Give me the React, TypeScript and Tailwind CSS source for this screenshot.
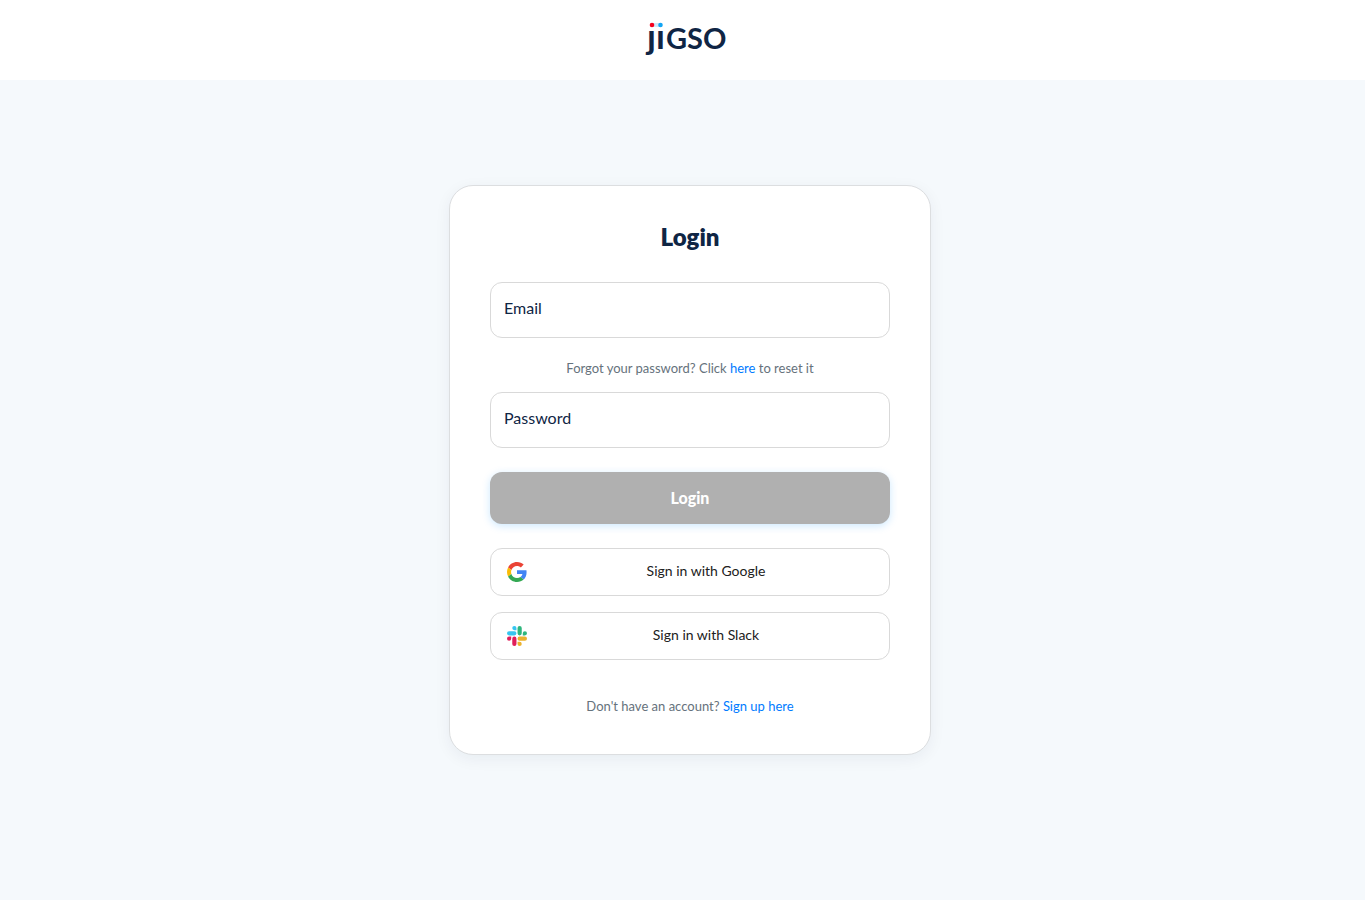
import { useState } from "react";

export default function App() {
  const [email, setEmail] = useState("");
  const [password, setPassword] = useState("");

  return (
    <div className="flex min-h-screen flex-col bg-[#f5f9fc] font-['Lato','Noto_Sans',sans-serif] text-[#0f2544]">
      <header className="flex h-20 justify-center bg-white pt-4 pl-[5px]">
        <a href="#" aria-label="Jigso home" className="block h-12">
          <JigsoLogo />
        </a>
      </header>

      <main className="flex flex-1 items-start justify-center pt-[105px] pb-12 pl-[15px]">
        <section className="w-full max-w-[482px] rounded-3xl border border-[#dcdee0] bg-white px-10 pt-8 pb-[38px] shadow-[0_4px_16px_rgba(15,37,68,0.06)]">
          <h1 className="text-center text-2xl leading-[38px] font-extrabold">Login</h1>

          <form className="mt-[26px]" onSubmit={(e) => e.preventDefault()}>
            <Field label="Email" type="email" value={email} onChange={setEmail} />
            <p className="pt-5 pb-[14px] text-center text-[13px] leading-5 text-[#66727c]">
              Forgot your password? Click{" "}
              <a href="#" className="text-[#007bff]">
                here
              </a>{" "}
              to reset it
            </p>
            <Field label="Password" type="password" value={password} onChange={setPassword} />
            <button
              type="submit"
              disabled={!email || !password}
              className="mt-6 h-13 w-full rounded-xl bg-[#1890ff] text-base font-black text-white shadow-[0_2px_8px_rgba(0,145,255,0.2)] disabled:bg-[#b0b0b0]"
            >
              Login
            </button>
          </form>

          <div className="mt-6 space-y-4">
            <ProviderButton label="Sign in with Google" icon={<GoogleIcon />} />
            <ProviderButton label="Sign in with Slack" icon={<SlackIcon />} />
          </div>

          <p className="mt-9 text-center text-[13px] leading-5 text-[#66727c]">
            Don't have an account?{" "}
            <a href="#" className="text-[#007bff]">
              Sign up here
            </a>
          </p>
        </section>
      </main>
    </div>
  );
}

type FieldProps = {
  label: string;
  type: string;
  value: string;
  onChange: (value: string) => void;
};

function Field({ label, type, value, onChange }: FieldProps) {
  return (
    <label className="flex h-14 items-center gap-3 rounded-xl border border-[#d9d9d9] bg-white px-[13px] pb-1 text-base">
      <span>{label}</span>
      <input
        type={type}
        value={value}
        onChange={(e) => onChange(e.target.value)}
        className="min-w-0 flex-1 bg-transparent outline-none"
      />
    </label>
  );
}

function ProviderButton({ label, icon }: { label: string; icon: React.ReactNode }) {
  return (
    <button
      type="button"
      className="flex h-12 w-full items-center gap-3 rounded-xl border border-[#d9d9d9] bg-white px-4 text-sm text-[#212121]"
    >
      {icon}
      <span className="flex-1 pb-0.5 text-center">{label}</span>
    </button>
  );
}

// Dotless j and i, the coloured bar stands in for their dots.
function JigsoLogo() {
  return (
    <svg width="88" height="48" viewBox="0 0 88 48" className="overflow-visible" aria-hidden>
      <text fill="#0f2544" fontFamily="Lato, sans-serif" fontWeight="700" y="33">
        <tspan x="6" fontSize="35">
          ȷı
        </tspan>
        <tspan x="25" fontSize="29">
          GSO
        </tspan>
      </text>
      <rect x="11" y="7" width="8" height="4" fill="#cfe9fa" />
      <circle cx="11" cy="9" r="2.3" fill="#f5001d" />
      <circle cx="19.5" cy="9" r="2.3" fill="#12a5f4" />
    </svg>
  );
}

function GoogleIcon() {
  return (
    <svg width="20" height="20" viewBox="0 0 48 48" className="shrink-0" aria-hidden>
      <path
        fill="#EA4335"
        d="M24 9.5c3.54 0 6.71 1.22 9.21 3.6l6.85-6.85C35.9 2.38 30.47 0 24 0 14.62 0 6.51 5.38 2.56 13.22l7.98 6.19C12.43 13.72 17.74 9.5 24 9.5z"
      />
      <path
        fill="#4285F4"
        d="M46.98 24.55c0-1.57-.15-3.09-.38-4.55H24v9.02h12.94c-.58 2.96-2.26 5.48-4.78 7.18l7.73 6c4.51-4.18 7.09-10.36 7.09-17.65z"
      />
      <path
        fill="#FBBC05"
        d="M10.53 28.59c-.48-1.45-.76-2.99-.76-4.59s.27-3.14.76-4.59l-7.98-6.19C.92 16.46 0 20.12 0 24c0 3.88.92 7.54 2.56 10.78l7.97-6.19z"
      />
      <path
        fill="#34A853"
        d="M24 48c6.48 0 11.93-2.13 15.89-5.81l-7.73-6c-2.15 1.45-4.92 2.3-8.16 2.3-6.26 0-11.57-4.22-13.47-9.91l-7.98 6.19C6.51 42.62 14.62 48 24 48z"
      />
    </svg>
  );
}

function SlackIcon() {
  return (
    <svg width="20" height="20" viewBox="0 0 24 24" className="shrink-0" aria-hidden>
      <path
        fill="#E01E5A"
        d="M5.042 15.165a2.528 2.528 0 0 1-2.52 2.523A2.528 2.528 0 0 1 0 15.165a2.527 2.527 0 0 1 2.522-2.52h2.52v2.52zM6.313 15.165a2.527 2.527 0 0 1 2.521-2.52 2.527 2.527 0 0 1 2.521 2.52v6.313A2.528 2.528 0 0 1 8.834 24a2.528 2.528 0 0 1-2.521-2.522v-6.313z"
      />
      <path
        fill="#36C5F0"
        d="M8.834 5.042a2.528 2.528 0 0 1-2.521-2.52A2.528 2.528 0 0 1 8.834 0a2.528 2.528 0 0 1 2.521 2.522v2.52H8.834zM8.834 6.313a2.528 2.528 0 0 1 2.521 2.521 2.528 2.528 0 0 1-2.521 2.521H2.522A2.528 2.528 0 0 1 0 8.834a2.528 2.528 0 0 1 2.522-2.521h6.312z"
      />
      <path
        fill="#2EB67D"
        d="M18.956 8.834a2.528 2.528 0 0 1 2.522-2.521A2.528 2.528 0 0 1 24 8.834a2.528 2.528 0 0 1-2.522 2.521h-2.522V8.834zM17.688 8.834a2.528 2.528 0 0 1-2.523 2.521 2.527 2.527 0 0 1-2.52-2.521V2.522A2.527 2.527 0 0 1 15.165 0a2.528 2.528 0 0 1 2.523 2.522v6.312z"
      />
      <path
        fill="#ECB22E"
        d="M15.165 18.956a2.528 2.528 0 0 1 2.523 2.522A2.528 2.528 0 0 1 15.165 24a2.527 2.527 0 0 1-2.52-2.522v-2.522h2.52zM15.165 17.688a2.527 2.527 0 0 1-2.52-2.523 2.526 2.526 0 0 1 2.52-2.52h6.313A2.527 2.527 0 0 1 24 15.165a2.528 2.528 0 0 1-2.522 2.523h-6.313z"
      />
    </svg>
  );
}
